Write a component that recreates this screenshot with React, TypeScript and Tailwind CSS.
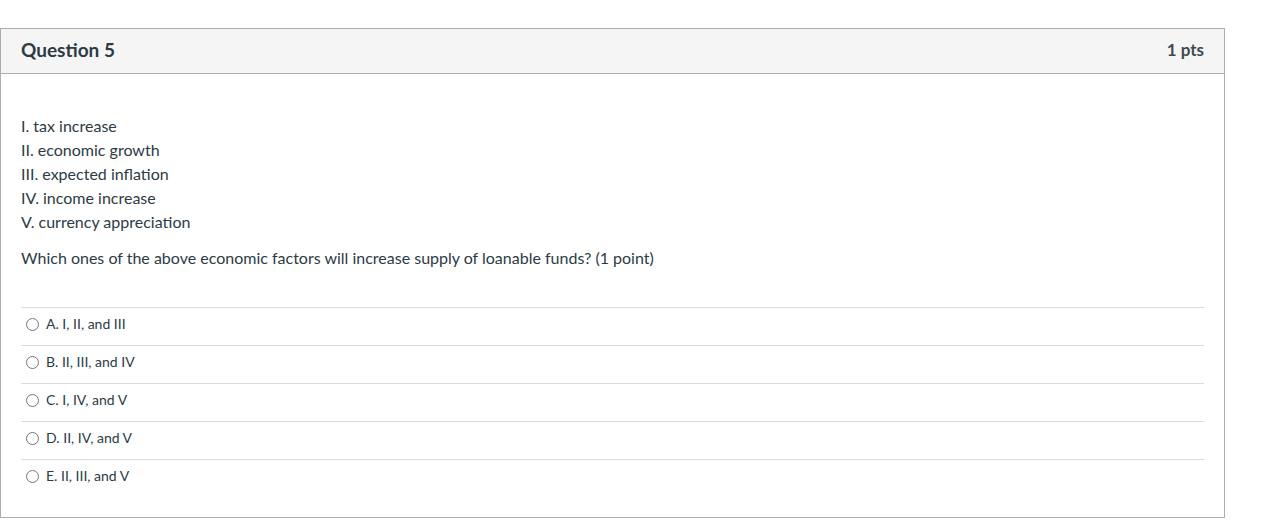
const FACTORS = [
  "I. tax increase",
  "II. economic growth",
  "III. expected inflation",
  "IV. income increase",
  "V. currency appreciation",
];

const ANSWERS = [
  "A. I, II, and III",
  "B. II, III, and IV",
  "C. I, IV, and V",
  "D. II, IV, and V",
  "E. II, III, and V",
];

export default function App() {
  return (
    <div
      className="min-h-screen bg-white pt-[28px] text-[#2d3b45]"
      style={{ fontFamily: "Lato, 'Noto Sans', sans-serif" }}
    >
      <div className="w-[1225px] border border-[#adadad]">
        <div className="flex h-[45px] items-center justify-between border-b border-[#adadad] bg-[#f5f5f5] px-5 pb-[2px]">
          <h2 className="text-[19px] font-bold">Question 5</h2>
          <span className="text-[17px] font-bold text-[#3d4a54]">1 pts</span>
        </div>

        <div className="px-5 pt-[40px] pb-5">
          <div className="text-[16px] leading-6">
            {FACTORS.map((f) => (
              <p key={f}>{f}</p>
            ))}
            <p className="mt-3">
              Which ones of the above economic factors will increase supply of loanable funds? (1 point)
            </p>
          </div>

          <div className="mt-[37px]">
            {ANSWERS.map((a) => (
              <label
                key={a}
                className="flex h-[38px] items-center gap-[7px] border-t border-[#dcdcdc] pb-[6px] pl-[5px] text-[14px]"
              >
                <span className="mt-[1px] h-[13px] w-[13px] rounded-full border border-[#767676] bg-white" />
                <span>{a}</span>
              </label>
            ))}
          </div>
        </div>
      </div>
    </div>
  );
}
